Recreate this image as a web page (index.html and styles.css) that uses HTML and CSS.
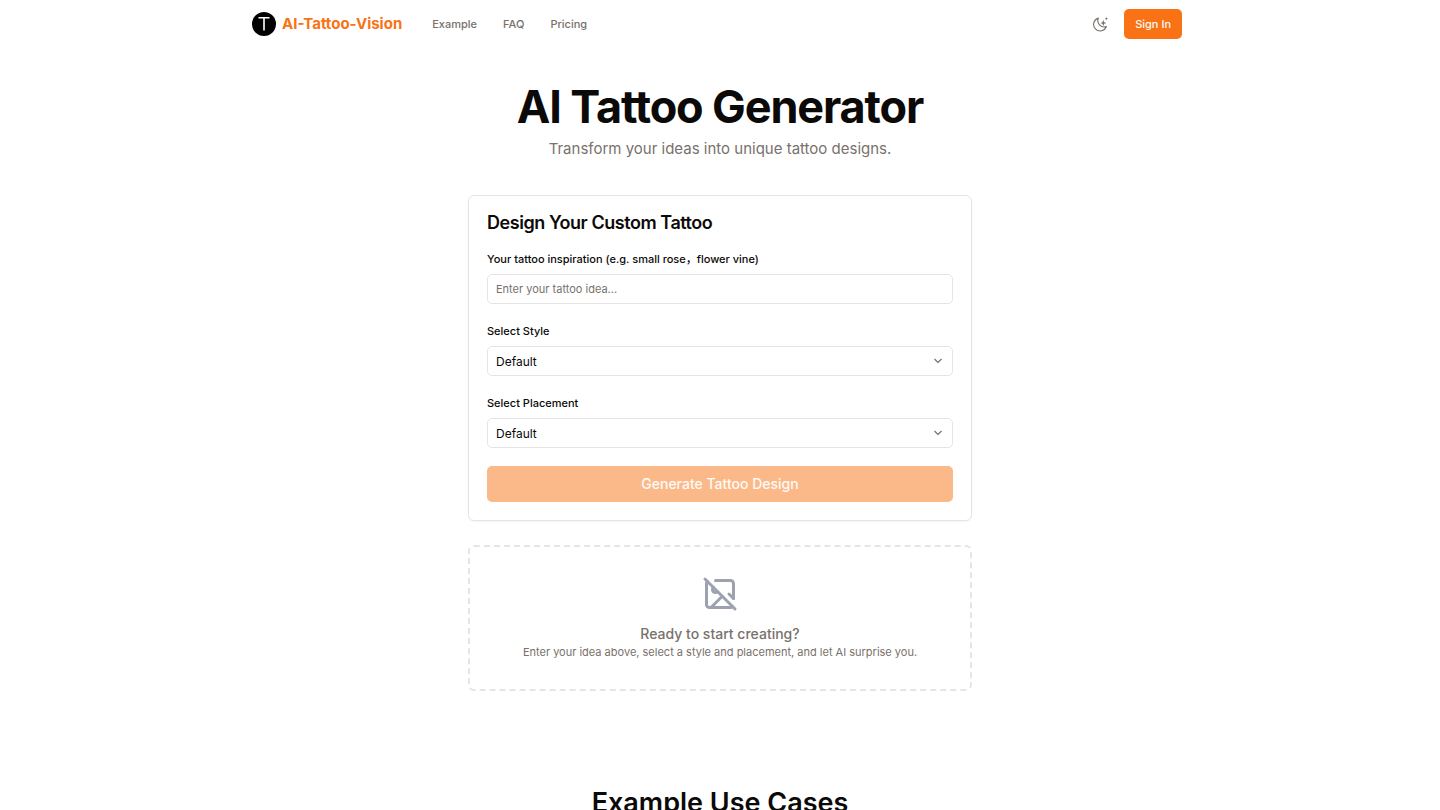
FILE: index.html
```html
<!DOCTYPE html>
<html lang="en">

<head>
	<meta charset="UTF-8">
	<meta name="viewport" content="width=device-width, initial-scale=1">
	<title>AI-Tattoo-Vision</title>
	<link rel="stylesheet" href="styles.css">
</head>

<body>

	<header class="header">
		<a class="brand" href="#">
			<svg class="logo" viewBox="0 0 24 24" aria-hidden="true">
				<circle cx="12" cy="12" r="12" fill="#000" />
				<path d="M6.5 5.8h11M12 5.8v12.7" fill="none" stroke="#fff" stroke-width="1.6" />
			</svg>
			AI-Tattoo-Vision
		</a>
		<nav class="nav">
			<a href="#example">Example</a>
			<a href="#faq">FAQ</a>
			<a href="#pricing">Pricing</a>
		</nav>
		<div class="actions">
			<button class="theme-btn" type="button" aria-label="Toggle theme">
				<svg viewBox="0 0 24 24" aria-hidden="true">
					<path d="M9.500 3.200a9.800 9.800 0 1 0 12 12.600A9.500 9.500 0 0 1 9.500 3.200z" fill="none" stroke="currentColor" stroke-width="1.700" stroke-linejoin="round" />
					<path d="M17 6l1.300 3.200 3.200 1.300-3.200 1.300L17 15l-1.300-3.200-3.200-1.300 3.200-1.300z" fill="currentColor" />
					<path d="M21.500 1.500l.8 1.700 1.700.8-1.700.8-.8 1.700-.8-1.700-1.700-.8 1.700-.8z" fill="currentColor" />
				</svg>
			</button>
			<button class="signin-btn" type="button">Sign In</button>
		</div>
	</header>

	<main class="main">

		<section class="hero">
			<h1>AI Tattoo Generator</h1>
			<p>Transform your ideas into unique tattoo designs.</p>
		</section>

		<form class="card">
			<h2>Design Your Custom Tattoo</h2>

			<div class="field">
				<label for="idea">Your tattoo inspiration (e.g. small rose，flower vine)</label>
				<input class="control" id="idea" type="text" placeholder="Enter your tattoo idea...">
			</div>

			<div class="field">
				<label for="style">Select Style</label>
				<div class="select">
					<select class="control" id="style">
						<option>Default</option>
					</select>
					<svg class="chevron" viewBox="0 0 12 12" aria-hidden="true">
						<path d="M2.500 4L6 7.500 9.500 4" />
					</svg>
				</div>
			</div>

			<div class="field">
				<label for="placement">Select Placement</label>
				<div class="select">
					<select class="control" id="placement">
						<option>Default</option>
					</select>
					<svg class="chevron" viewBox="0 0 12 12" aria-hidden="true">
						<path d="M2.500 4L6 7.500 9.500 4" />
					</svg>
				</div>
			</div>

			<button class="generate-btn" type="submit" disabled>Generate Tattoo Design</button>
		</form>

		<section class="empty">
			<svg class="empty-icon" viewBox="0 0 24 24" aria-hidden="true">
				<path d="M2 2l20 20" />
				<path d="M10.410 10.410a2 2 0 1 1-2.830-2.830" />
				<path d="M13.500 13.500L6 21" />
				<path d="M18 12l3 3" />
				<path d="M3.590 3.590A1.990 1.990 0 0 0 3 5v14a2 2 0 0 0 2 2h14c.55 0 1.052-.22 1.410-.59" />
				<path d="M21 15V5a2 2 0 0 0-2-2H9" />
			</svg>
			<p class="empty-title">Ready to start creating?</p>
			<p class="empty-text">Enter your idea above, select a style and placement, and let AI surprise you.</p>
		</section>

	</main>

	<section class="cases" id="example">
		<h2>Example Use Cases</h2>
	</section>

</body>

</html>
```

FILE: styles.css
```css
* {
	box-sizing: border-box;
}

body {
	background: #fff;
	color: #0c0a09;
	font-family: Inter, "Noto Sans CJK SC", sans-serif;
	font-size: 11px;
	line-height: 16px;
	margin: 0;
}

h1,
h2,
p {
	margin: 0;
}

a {
	color: inherit;
	text-decoration: none;
}

button,
input,
select {
	font-family: inherit;
}

/* header */
.header {
	display: flex;
	align-items: center;
	height: 48px;
	max-width: 948px;
	margin: 0 auto;
	padding: 0 12px 0 6px;
}

.brand {
	display: flex;
	align-items: center;
	gap: 6px;
	color: #f97316;
	font-size: 15px;
	font-weight: 700;
}

.logo {
	width: 24px;
	height: 24px;
}

.nav {
	display: flex;
	gap: 26px;
	margin-left: 30px;
	color: #78716c;
	font-weight: 500;
}

.actions {
	display: flex;
	align-items: center;
	gap: 16px;
	margin-left: auto;
}

.theme-btn {
	display: flex;
	padding: 0;
	border: 0;
	background: none;
	color: #78716c;
}

.theme-btn svg {
	width: 16px;
	height: 16px;
}

.signin-btn {
	height: 30px;
	padding: 0 11px;
	border: 0;
	border-radius: 5px;
	background: #f97316;
	color: #fafaf9;
	font-size: 11px;
	font-weight: 500;
}

/* hero */
.main {
	max-width: 504px;
	margin: 0 auto;
}

.hero {
	padding: 32px 0 36px;
	text-align: center;
}

.hero h1 {
	font-size: 45px;
	font-weight: 700;
	line-height: 54px;
	letter-spacing: -0.025em;
}

.hero p {
	margin-top: 4px;
	color: #78716c;
	font-size: 15px;
	line-height: 21px;
}

/* form card */
.card {
	padding: 18px;
	border: 1px solid #e7e5e4;
	border-radius: 6px;
	box-shadow: 0 1px 2px rgba(0, 0, 0, .05);
}

.card h2 {
	margin-bottom: 18px;
	font-size: 18px;
	font-weight: 600;
	line-height: 18px;
	letter-spacing: -0.025em;
}

.field {
	display: flex;
	flex-direction: column;
	gap: 6px;
	margin-bottom: 18px;
}

.field label {
	font-weight: 500;
	line-height: 18px;
}

.control {
	width: 100%;
	height: 30px;
	padding: 0 8px;
	border: 1px solid #e7e5e4;
	border-radius: 5px;
	background: #fff;
	color: #0c0a09;
	font-size: 11px;
}

.control::placeholder {
	color: #78716c;
}

.select {
	position: relative;
}

.select .control {
	display: block;
	appearance: none;
	font-size: 12px;
}

.chevron {
	position: absolute;
	top: 9px;
	right: 9px;
	width: 12px;
	height: 12px;
	fill: none;
	stroke: #78716c;
	stroke-width: 1.2;
	pointer-events: none;
}

.generate-btn {
	display: block;
	width: 100%;
	height: 36px;
	padding: 0 12px 2px;
	border: 0;
	border-radius: 5px;
	background: #fbb98a;
	color: #fffaf5;
	font-size: 14px;
	font-weight: 500;
}

/* empty state */
.empty {
	margin-top: 24px;
	padding: 29px 24px;
	border: 2px dashed #e7e5e4;
	border-radius: 6px;
	color: #78716c;
	text-align: center;
}

.empty-icon {
	display: block;
	width: 36px;
	height: 36px;
	margin: 0 auto 12px;
	fill: none;
	stroke: #9ca3af;
	stroke-width: 2;
	stroke-linecap: round;
	stroke-linejoin: round;
}

.empty-title {
	font-size: 14px;
	font-weight: 500;
	line-height: 20px;
}

/* use cases */
.cases {
	padding: 94px 0 48px;
	text-align: center;
}

.cases h2 {
	font-size: 27px;
	font-weight: 600;
	line-height: 36px;
}
```
